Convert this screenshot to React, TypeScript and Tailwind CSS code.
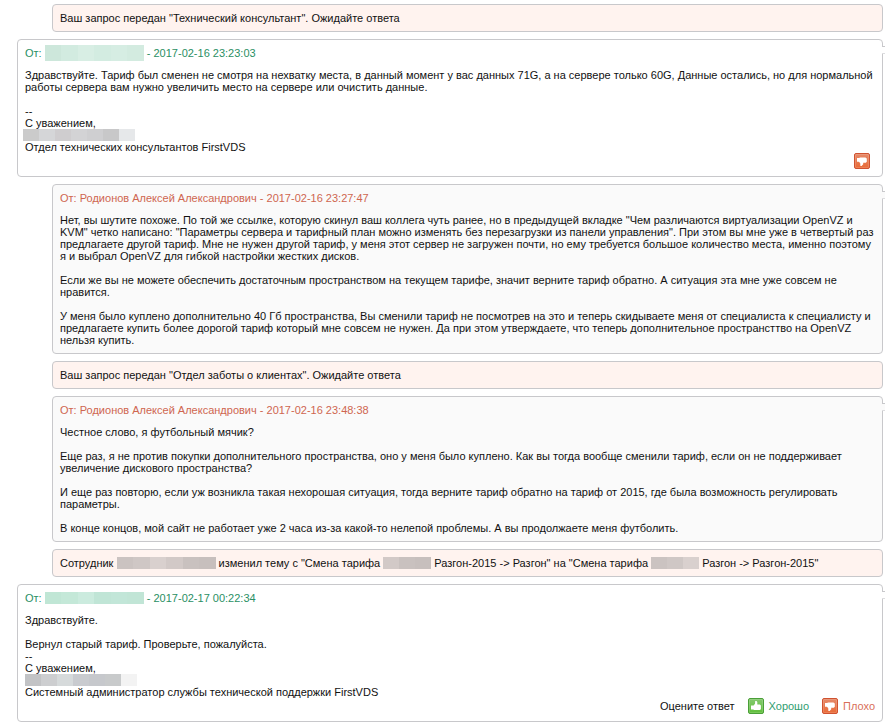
import type { ReactNode } from "react";

type MosaicProps = {
	tiles: string[];
	className: string;
};

function Mosaic({ tiles, className }: MosaicProps) {
	return (
		<span aria-hidden="true" className={`inline-flex align-top ${className}`}>
			{tiles.map((tile, i) => (
				<span key={i} className={`flex-1 ${tile}`} />
			))}
		</span>
	);
}

const greenTiles = ["bg-[#cde7db]", "bg-[#d2ebe0]", "bg-[#d8eee4]", "bg-[#d3ece1]", "bg-[#d6ede3]", "bg-[#d3ebe0]"];
const tealTiles = ["bg-[#c0e6d5]", "bg-[#c4e8d8]", "bg-[#cbebde]", "bg-[#c0e5d6]", "bg-[#c2e6d8]", "bg-[#c1e5d6]"];
const grayTiles = ["bg-[#cbcbcb]", "bg-[#d5d6d8]", "bg-[#cfcdcf]", "bg-[#d3d3d5]", "bg-[#cfcfd1]", "bg-[#c8c8c9]", "bg-[#e6e8ea]"];
const steelTiles = ["bg-[#c2c3c5]", "bg-[#cdced0]", "bg-[#d6dadb]", "bg-[#c9cbcf]", "bg-[#c6c8cc]", "bg-[#c8cacb]", "bg-[#f3f3f3]"];
const roseTiles = ["bg-[#cbc3c1]", "bg-[#cfc7c5]", "bg-[#d9d0ce]", "bg-[#d2c9c7]", "bg-[#c9c1bf]", "bg-[#c7bfbd]"];

function Notice({ children }: { children: ReactNode }) {
	return (
		<div className="ml-[35px] rounded border border-[#c8c8cb] bg-[#fff3ef] p-[7px]">{children}</div>
	);
}

type MessageProps = {
	author: ReactNode;
	date: string;
	staff?: boolean;
	footer?: ReactNode;
	children: ReactNode;
};

function Message({ author, date, staff, footer, children }: MessageProps) {
	return (
		<article
			className={`relative rounded border border-[#c8c8cb] p-[7px] ${staff ? "bg-white" : "ml-[35px] bg-[#fafafa]"}`}
		>
			<header className={`mb-2.5 ${staff ? "text-[#2a8f64]" : "text-[#cf6650]"}`}>
				От: {author} - {date}
			</header>
			<div className="whitespace-pre-line">{children}</div>
			{footer && <footer className="flex items-center justify-end gap-[13px]">{footer}</footer>}
			<span
				className={`absolute top-1.5 -right-[3px] h-2 w-[3px] border-y border-t-[#c8c8cb] border-b-[#dddddf] ${staff ? "bg-white" : "bg-[#fafafa]"}`}
			/>
		</article>
	);
}

function ThumbIcon({ down }: { down?: boolean }) {
	return (
		<svg className="size-4 shrink-0" viewBox="0 0 16 16" aria-hidden="true">
			<defs>
				<linearGradient id="thumb-down" x1="0" y1="0" x2="0" y2="1">
					<stop offset="0" stopColor="#e58a6a" />
					<stop offset="1" stopColor="#ea6a36" />
				</linearGradient>
				<linearGradient id="thumb-up" x1="0" y1="0" x2="0" y2="1">
					<stop offset="0" stopColor="#86c970" />
					<stop offset="1" stopColor="#5fbf3a" />
				</linearGradient>
			</defs>
			<rect
				x=".5"
				y=".5"
				width="15"
				height="15"
				rx="1.5"
				fill={down ? "url(#thumb-down)" : "url(#thumb-up)"}
				stroke={down ? "#d05230" : "#4a9f38"}
			/>
			<rect x="1.5" y="1.5" width="13" height="13" rx=".5" fill="none" stroke="#fff" strokeOpacity=".14" />
			{down ? (
				<path fill="#fff" d="M3 5h2.2l.8-.6h5.4l1.4 1v3.4l-1 .9H9.2v1.5L7.6 13H6.4l-.2-3L4.8 8.8H3z" />
			) : (
				<path fill="#fff" d="M3 7.4h2.6L7 5.8 7.2 3h1.3l.8 1v2.6h2.6l1 .8v3.8l-1.2.9H6l-.6-.5H3z" />
			)}
		</svg>
	);
}

export default function App() {
	return (
		<main className="flex flex-col gap-[7px] bg-white pt-1 pr-0.5 pb-1.5 pl-[17px] font-['Liberation_Sans',Arial,sans-serif] text-[11px] leading-3 text-[#111]">
			<Notice>Ваш запрос передан "Технический консультант". Ожидайте ответа</Notice>

			<Message
				staff
				author={<Mosaic tiles={greenTiles} className="-my-0.5 h-4 w-[99px]" />}
				date="2017-02-16 23:23:03"
				footer={
					<button type="button" aria-label="Плохо" className="mr-[5px]">
						<ThumbIcon down />
					</button>
				}
			>
				{"Здравствуйте. Тариф был сменен не смотря на нехватку места, в данный момент у вас данных 71G, а на сервере только 60G, Данные остались, но для нормальной работы сервера вам нужно увеличить место на сервере или очистить данные.\n\n--\nС уважением,\n"}
				<Mosaic tiles={grayTiles} className="-ml-0.5 h-3 w-28" />
				{"\nОтдел технических консультантов FirstVDS"}
			</Message>

			<Message author="Родионов Алексей Александрович" date="2017-02-16 23:27:47">
				{`Нет, вы шутите похоже. По той же ссылке, которую скинул ваш коллега чуть ранее, но в предыдущей вкладке "Чем различаются виртуализации OpenVZ и KVM" четко написано: "Параметры сервера и тарифный план можно изменять без перезагрузки из панели управления". При этом вы мне уже в четвертый раз предлагаете другой тариф. Мне не нужен другой тариф, у меня этот сервер не загружен почти, но ему требуется большое количество места, именно поэтому я и выбрал OpenVZ для гибкой настройки жестких дисков.

Если же вы не можете обеспечить достаточным пространством на текущем тарифе, значит верните тариф обратно. А ситуация эта мне уже совсем не нравится.

У меня было куплено дополнительно 40 Гб пространства, Вы сменили тариф не посмотрев на это и теперь скидываете меня от специалиста к специалисту и предлагаете купить более дорогой тариф который мне совсем не нужен. Да при этом утверждаете, что теперь дополнительное пространсттво на OpenVZ нельзя купить.`}
			</Message>

			<Notice>Ваш запрос передан "Отдел заботы о клиентах". Ожидайте ответа</Notice>

			<Message author="Родионов Алексей Александрович" date="2017-02-16 23:48:38">
				{`Честное слово, я футбольный мячик?

Еще раз, я не против покупки дополнительного пространства, оно у меня было куплено. Как вы тогда вообще сменили тариф, если он не поддерживает увеличение дискового пространства?

И еще раз повторю, если уж возникла такая нехорошая ситуация, тогда верните тариф обратно на тариф от 2015, где была возможность регулировать параметры.

В конце концов, мой сайт не работает уже 2 часа из-за какой-то нелепой проблемы. А вы продолжаете меня футболить.`}
			</Message>

			<Notice>
				Сотрудник <Mosaic tiles={roseTiles} className="h-3 w-[99px]" /> изменил тему с "Смена тарифа{" "}
				<Mosaic tiles={roseTiles.slice(3)} className="h-3 w-12" /> Разгон-2015 -&gt; Разгон" на "Смена тарифа{" "}
				<Mosaic tiles={roseTiles.slice(0, 3)} className="h-3 w-12" /> Разгон -&gt; Разгон-2015"
			</Notice>

			<Message
				staff
				author={<Mosaic tiles={tealTiles} className="h-3 w-[99px]" />}
				date="2017-02-17 00:22:34"
				footer={
					<>
						<span>Оцените ответ</span>
						<button type="button" className="flex items-center gap-[5px] text-[#2f9e70]">
							<ThumbIcon />
							Хорошо
						</button>
						<button type="button" className="flex items-center gap-[5px] text-[#d9705a]">
							<ThumbIcon down />
							Плохо
						</button>
					</>
				}
			>
				{"Здравствуйте.\n\nВернул старый тариф. Проверьте, пожалуйста.\n--\nС уважением,\n"}
				<Mosaic tiles={steelTiles} className="h-3 w-28" />
				{"\nСистемный администратор службы технической поддержки FirstVDS"}
			</Message>
		</main>
	);
}
